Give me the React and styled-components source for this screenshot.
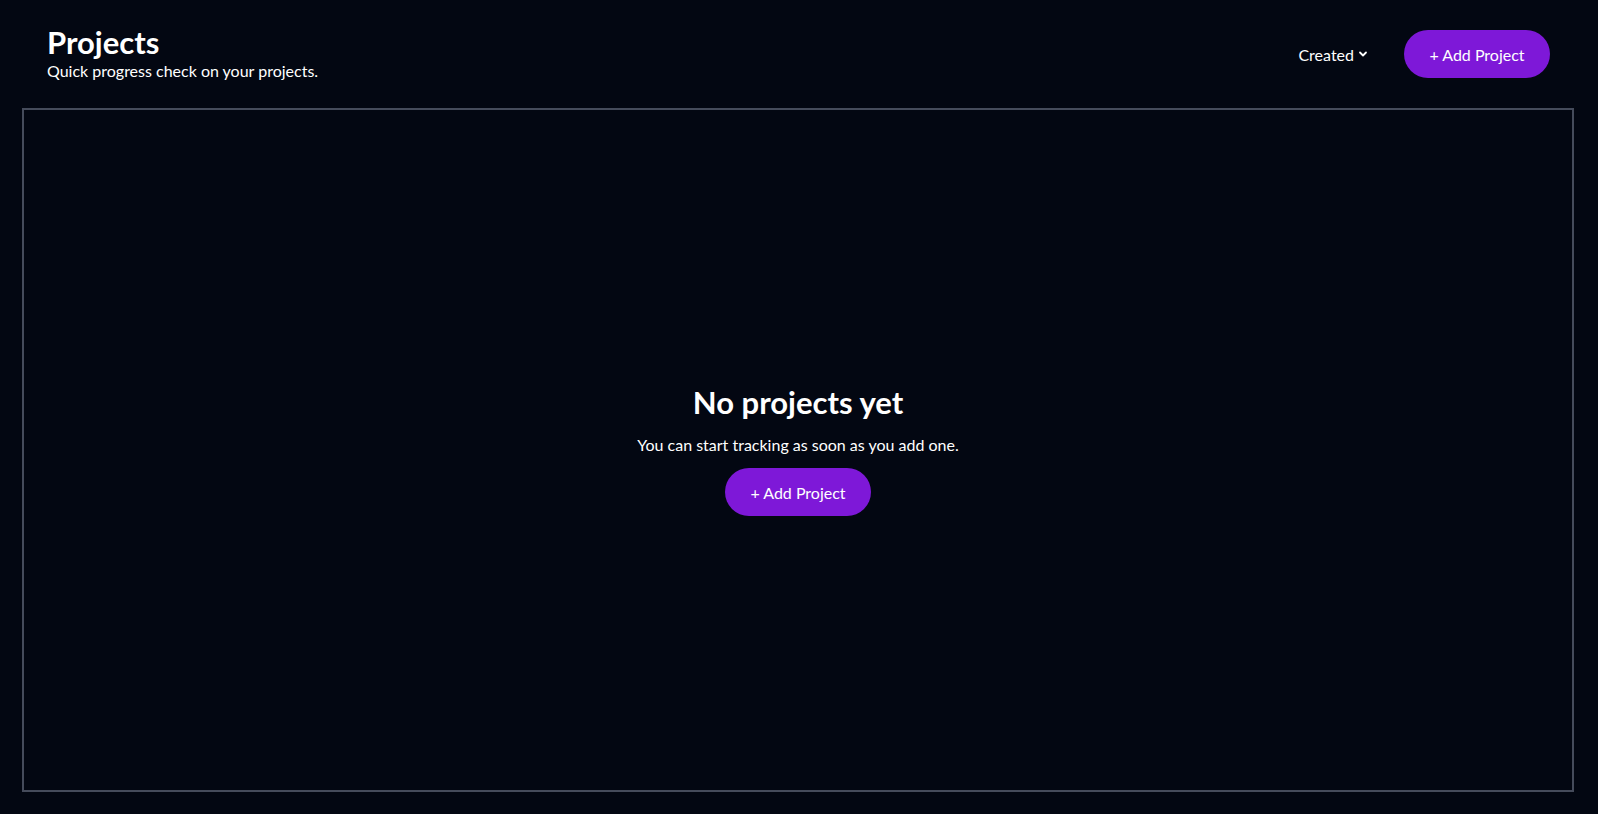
import styled, { createGlobalStyle } from 'styled-components'

const GlobalStyle = createGlobalStyle`
  html, body {
    margin: 0;
    padding: 0;
    background: #030712;
  }
  body {
    font-family: Lato, "Noto Sans", sans-serif;
    color: #ffffff;
  }
  * { box-sizing: border-box; }
`

const Page = styled.div`
  height: 814px;
  display: flex;
  flex-direction: column;
  padding: 0 24px 22px 22px;
`

const Header = styled.header`
  height: 108px;
  display: flex;
  align-items: flex-start;
  justify-content: space-between;
  padding: 26px 24px 0 25px;
`

const TitleBlock = styled.div`
  display: flex;
  flex-direction: column;
`

const Title = styled.h1`
  margin: 0;
  font-size: 31px;
  line-height: 32px;
  font-weight: 700;
`

const Subtitle = styled.p`
  margin: 3px 0 0;
  font-size: 16px;
  line-height: 20px;
`

const Actions = styled.div`
  display: flex;
  align-items: center;
  gap: 36px;
  padding-top: 4px;
`

const SortButton = styled.button`
  display: flex;
  align-items: center;
  gap: 4px;
  background: none;
  border: none;
  color: #fff;
  font-family: inherit;
  font-size: 16px;
  padding: 0;
  cursor: pointer;
`

const AddButton = styled.button`
  height: 48px;
  width: 146px;
  border: none;
  border-radius: 999px;
  background: #7e18d8;
  color: #fff;
  font-family: inherit;
  font-size: 16px;
  cursor: pointer;
`

const Board = styled.section`
  flex: 1;
  border: 2px solid #454b5b;
  display: flex;
  flex-direction: column;
  align-items: center;
  justify-content: center;
`

const EmptyTitle = styled.h2`
  margin: 0;
  font-size: 31px;
  line-height: 36px;
  font-weight: 700;
`

const EmptyText = styled.p`
  margin: 14px 0 12px;
  font-size: 16px;
  line-height: 22px;
`

const Chevron = () => (
  <svg width="10" height="10" viewBox="0 0 10 10" fill="none">
    <path d="M2 3.5 L5 6.5 L8 3.5" stroke="#fff" strokeWidth="1.8" strokeLinecap="round" strokeLinejoin="round" />
  </svg>
)

export default function App() {
  return (
    <>
      <GlobalStyle />
      <Page>
        <Header>
          <TitleBlock>
            <Title>Projects</Title>
            <Subtitle>Quick progress check on your projects.</Subtitle>
          </TitleBlock>
          <Actions>
            <SortButton>
              Created <Chevron />
            </SortButton>
            <AddButton>+ Add Project</AddButton>
          </Actions>
        </Header>
        <Board>
          <EmptyTitle>No projects yet</EmptyTitle>
          <EmptyText>You can start tracking as soon as you add one.</EmptyText>
          <AddButton>+ Add Project</AddButton>
        </Board>
      </Page>
    </>
  )
}
